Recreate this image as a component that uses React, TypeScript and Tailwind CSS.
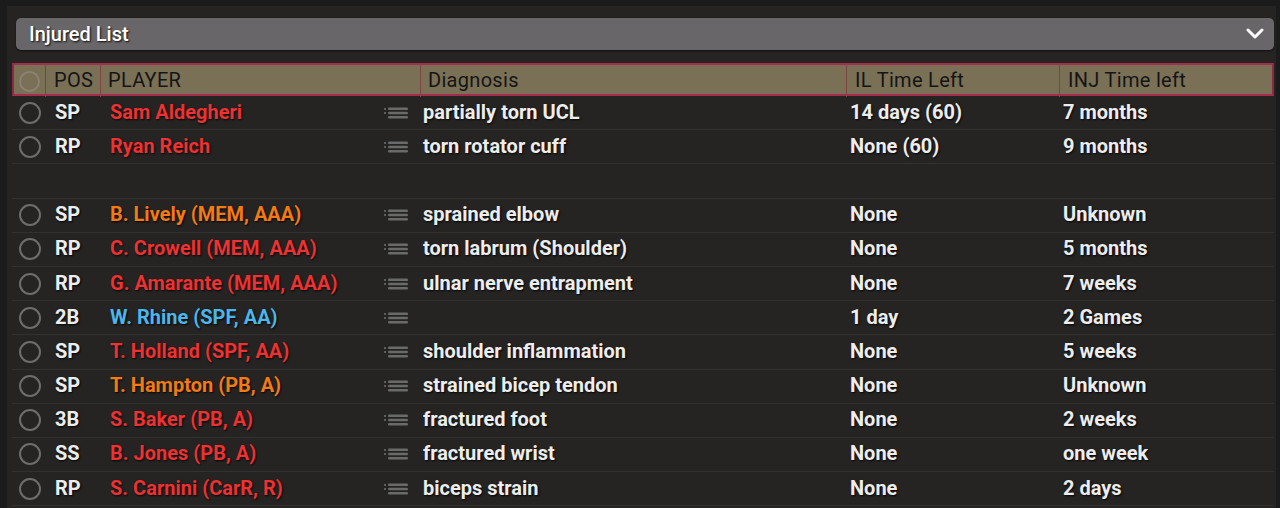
import React from "react";

type Row = { pos: string; name: string; color: string; diag: string; il: string; inj: string } | null;

const RED = "text-[#ec3232]";
const ORANGE = "text-[#f27b14]";
const BLUE = "text-[#4cb6ea]";

const rows: Row[] = [
  { pos: "SP", name: "Sam Aldegheri", color: RED, diag: "partially torn UCL", il: "14 days (60)", inj: "7 months" },
  { pos: "RP", name: "Ryan Reich", color: RED, diag: "torn rotator cuff", il: "None (60)", inj: "9 months" },
  null,
  { pos: "SP", name: "B. Lively (MEM, AAA)", color: ORANGE, diag: "sprained elbow", il: "None", inj: "Unknown" },
  { pos: "RP", name: "C. Crowell (MEM, AAA)", color: RED, diag: "torn labrum (Shoulder)", il: "None", inj: "5 months" },
  { pos: "RP", name: "G. Amarante (MEM, AAA)", color: RED, diag: "ulnar nerve entrapment", il: "None", inj: "7 weeks" },
  { pos: "2B", name: "W. Rhine (SPF, AA)", color: BLUE, diag: "", il: "1 day", inj: "2 Games" },
  { pos: "SP", name: "T. Holland (SPF, AA)", color: RED, diag: "shoulder inflammation", il: "None", inj: "5 weeks" },
  { pos: "SP", name: "T. Hampton (PB, A)", color: ORANGE, diag: "strained bicep tendon", il: "None", inj: "Unknown" },
  { pos: "3B", name: "S. Baker (PB, A)", color: RED, diag: "fractured foot", il: "None", inj: "2 weeks" },
  { pos: "SS", name: "B. Jones (PB, A)", color: RED, diag: "fractured wrist", il: "None", inj: "one week" },
  { pos: "RP", name: "S. Carnini (CarR, R)", color: RED, diag: "biceps strain", il: "None", inj: "2 days" },
];

const ListIcon = () => (
  <svg width="24" height="16" viewBox="0 0 24 16" className="shrink-0 mt-[2px]">
    <rect x="0" y="3" width="2" height="2" fill="#5e5e5e" />
    <rect x="4" y="2.5" width="20" height="2.6" rx="1.2" fill="#6a6a6a" />
    <rect x="0" y="7" width="2" height="2" fill="#5e5e5e" />
    <rect x="4" y="6.7" width="20" height="2.6" rx="1.2" fill="#6a6a6a" />
    <rect x="4" y="10.9" width="20" height="2.6" rx="1.2" fill="#6a6a6a" />
  </svg>
);

const Radio = ({ faded }: { faded?: boolean }) => (
  <div
    className={
      "rounded-full border-2 " +
      (faded ? "w-[21px] h-[21px] border-[#8a8272]" : "w-[22px] h-[22px] border-[#6d6d6d] mt-[2px]")
    }
  />
);

const shadow = "[text-shadow:1px_1px_2px_rgba(0,0,0,0.9)]";

export default function App() {
  return (
    <div
      className="w-[1280px] h-[508px] bg-[#1b1b1b] overflow-hidden pl-[7px] pt-[6px] pr-[4px]"
      style={{ fontFamily: "Roboto, 'Noto Sans', sans-serif" }}
    >
      <div className="h-full bg-[#252423] pl-[5px] pr-[2px] pt-[12px]">
        <div className="ml-[4px] h-[32px] rounded-[5px] bg-[#69666a] shadow-[0_1px_2px_rgba(0,0,0,0.6)] flex items-center justify-between pl-[13px] pr-[10px]">
          <span className={"text-white font-medium text-[20px] " + shadow}>Injured List</span>
          <svg width="18" height="12" viewBox="0 0 18 12">
            <path d="M2 2 L9 9 L16 2" stroke="white" strokeWidth="3" fill="none" strokeLinecap="round" strokeLinejoin="round" />
          </svg>
        </div>
        <div className="mt-[13px]">
          <div className="grid grid-cols-[32px_55px_320px_426px_213px_1fr] h-[33px] bg-[#7a7056] border-y-2 border-[#a52c4f] border-x-2 border-x-[#8a2a45] text-[#151515] text-[20px] tracking-[0.3px]">
            <div className="flex items-center justify-center border-r border-[#80433f]">
              <Radio faded />
            </div>
            <div className="flex items-center pl-[8px] pb-[2px] border-r border-[#80433f]">POS</div>
            <div className="flex items-center pl-[7px] pb-[2px] border-r border-[#80433f]">PLAYER</div>
            <div className="flex items-center pl-[7px] pb-[2px] border-r border-[#80433f]">Diagnosis</div>
            <div className="flex items-center pl-[8px] pb-[2px] border-r border-[#80433f]">IL Time Left</div>
            <div className="flex items-center pl-[8px] pb-[2px]">INJ Time left</div>
          </div>
          {rows.map((r, i) => (
            <div
              key={i}
              className="grid grid-cols-[32px_55px_320px_426px_213px_1fr] h-[34.2px] pb-[2px] border-b border-[#323131] items-center text-[20px] font-bold text-[#ededed]"
            >
              {r ? (
                <>
                  <div className="flex items-center justify-center pl-[4px]">
                    <Radio />
                  </div>
                  <div className={"pl-[11px] " + shadow}>{r.pos}</div>
                  <div className="flex items-center justify-between pl-[11px] pr-[11px]">
                    <span className={r.color + " " + shadow}>{r.name}</span>
                    <ListIcon />
                  </div>
                  <div className={"pl-[4px] " + shadow}>{r.diag}</div>
                  <div className={"pl-[5px] " + shadow}>{r.il}</div>
                  <div className={"pl-[5px] " + shadow}>{r.inj}</div>
                </>
              ) : null}
            </div>
          ))}
        </div>
      </div>
    </div>
  );
}
